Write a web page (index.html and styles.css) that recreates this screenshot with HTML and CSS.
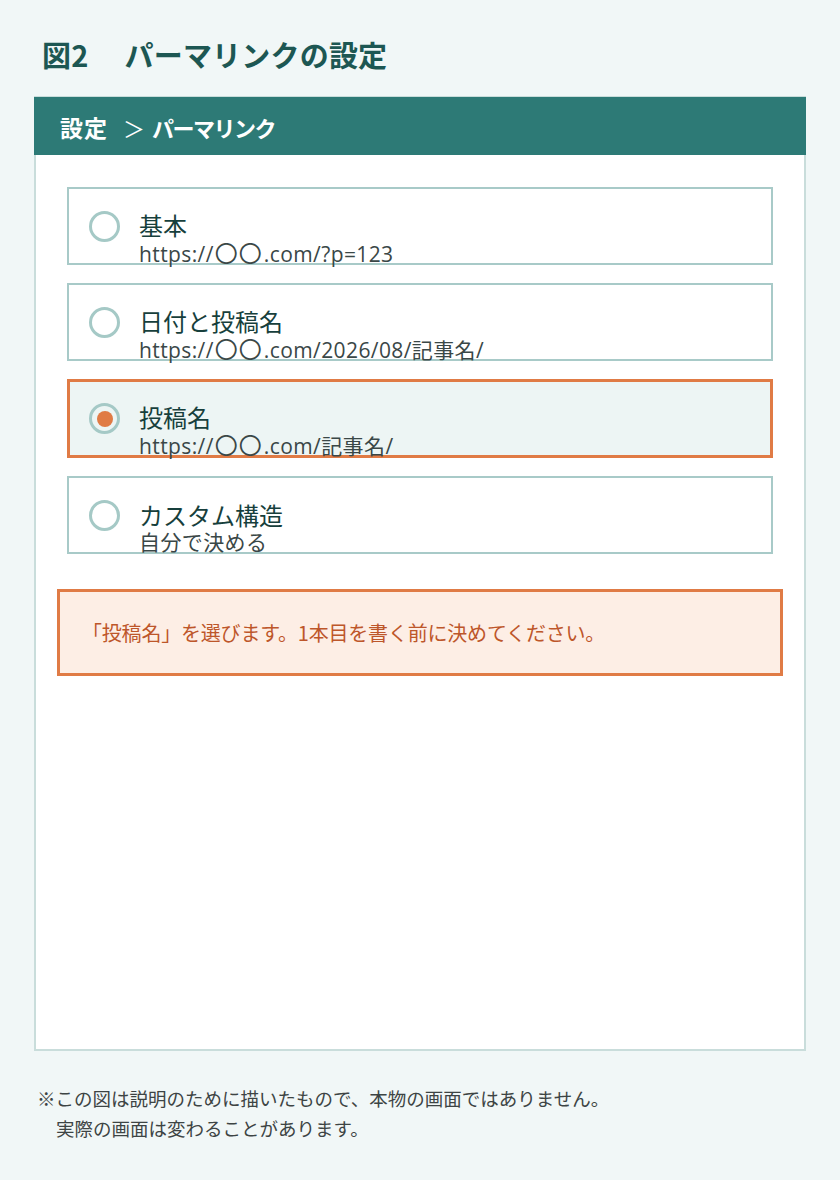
FILE: index.html
```html
<!DOCTYPE html>
<html lang="ja">
<head>
<meta charset="utf-8">
<link rel="stylesheet" href="styles.css">
</head>
<body>
<div class="page">
  <h1 class="title">図2<span class="title-gap"></span>パーマリンクの設定</h1>
  <div class="panel">
    <div class="panel-head"><span class="crumb-a">設定</span><span class="sep">＞</span><span class="crumb-b">パーマリンク</span></div>
    <div class="panel-body">
      <div class="options">
        <div class="option">
          <span class="radio"></span>
          <div class="text">
            <div class="label">基本</div>
            <div class="sub">https://<span class="maru">〇〇</span>.com/?p=123</div>
          </div>
        </div>
        <div class="option">
          <span class="radio"></span>
          <div class="text">
            <div class="label">日付と投稿名</div>
            <div class="sub">https://<span class="maru">〇〇</span>.com/2026/08/記事名/</div>
          </div>
        </div>
        <div class="option selected">
          <span class="radio"><span class="dot"></span></span>
          <div class="text">
            <div class="label">投稿名</div>
            <div class="sub">https://<span class="maru">〇〇</span>.com/記事名/</div>
          </div>
        </div>
        <div class="option">
          <span class="radio"></span>
          <div class="text">
            <div class="label">カスタム構造</div>
            <div class="sub">自分で決める</div>
          </div>
        </div>
      </div>
      <div class="note">「投稿名」を選びます。1本目を書く前に決めてください。</div>
    </div>
  </div>
  <div class="footnote">
    <p>※この図は説明のために描いたもので、本物の画面ではありません。</p>
    <p class="indent">実際の画面は変わることがあります。</p>
  </div>
</div>
</body>
</html>
```

FILE: styles.css
```css
* { box-sizing: border-box; }
html, body {
  margin: 0;
  padding: 0;
  background: #f1f7f7;
}
body {
  font-family: "Noto Sans CJK JP", "Noto Sans", sans-serif;
  width: 840px;
  height: 1180px;
  overflow: hidden;
}
.page {
  padding: 0 34px;
}
.title {
  margin: 0;
  padding: 32px 0 0 8px;
  height: 96px;
  font-size: 29px;
  line-height: 44px;
  font-weight: 700;
  color: #1d5753;
  letter-spacing: 0.2px;
}
.title-gap {
  display: inline-block;
  width: 36px;
}
.panel {
  height: 955px;
  border: 2px solid #c9dddb;
  border-top-width: 1px;
  background: #ffffff;
}
.panel-head {
  height: 58px;
  background: #2d7a76;
  color: #ffffff;
  font-size: 22px;
  font-weight: 700;
  line-height: 58px;
  padding-left: 26px;
  margin: 0 -2px;
  padding-top: 1px;
}
.crumb-a {
  font-size: 23px;
  letter-spacing: 1px;
}
.sep {
  font-weight: 400;
  font-size: 22px;
  margin: 0 7px 0 15px;
}
.crumb-b {
  letter-spacing: -1.5px;
}
.panel-body {
  padding: 32px 21px 0 21px;
}
.options {
  display: flex;
  flex-direction: column;
  gap: 18px;
  padding: 0 10px;
}
.option {
  height: 78px;
  border: 2px solid #a8cac8;
  display: flex;
  align-items: center;
  padding-left: 20px;
  background: #ffffff;
}
.option.selected {
  border: 3px solid #e07b45;
  background: #edf5f4;
  height: 79px;
  padding-left: 19px;
}
.radio {
  width: 31px;
  height: 31px;
  border: 3px solid #a5c9c6;
  border-radius: 50%;
  display: flex;
  align-items: center;
  justify-content: center;
  flex: none;
}
.dot {
  width: 16px;
  height: 16px;
  border-radius: 50%;
  background: #e07b45;
}
.text {
  margin-left: 19px;
  padding-top: 25px;
}
.label {
  font-size: 24px;
  line-height: 26px;
  color: #173f3c;
}
.sub {
  font-family: "Open Sans", "Noto Sans CJK JP", sans-serif;
  font-size: 21px;
  line-height: 24px;
  color: #3a4747;
  margin-top: 2px;
  letter-spacing: 0.4px;
}
.maru {
  font-family: "Noto Sans CJK JP", sans-serif;
  font-size: 23px;
  letter-spacing: 1px;
  margin: 0 1px;
}
.note {
  margin-top: 35px;
  height: 87px;
  border: 3px solid #e07b45;
  background: #fdeee5;
  color: #bd562a;
  font-size: 20px;
  display: flex;
  align-items: center;
  padding-left: 22px;
  letter-spacing: -0.2px;
}
.footnote {
  padding: 32px 0 0 3px;
  color: #3d4444;
  font-size: 18.5px;
  line-height: 30px;
}
.footnote p { margin: 0; }
.footnote .indent { padding-left: 19px; }
```
